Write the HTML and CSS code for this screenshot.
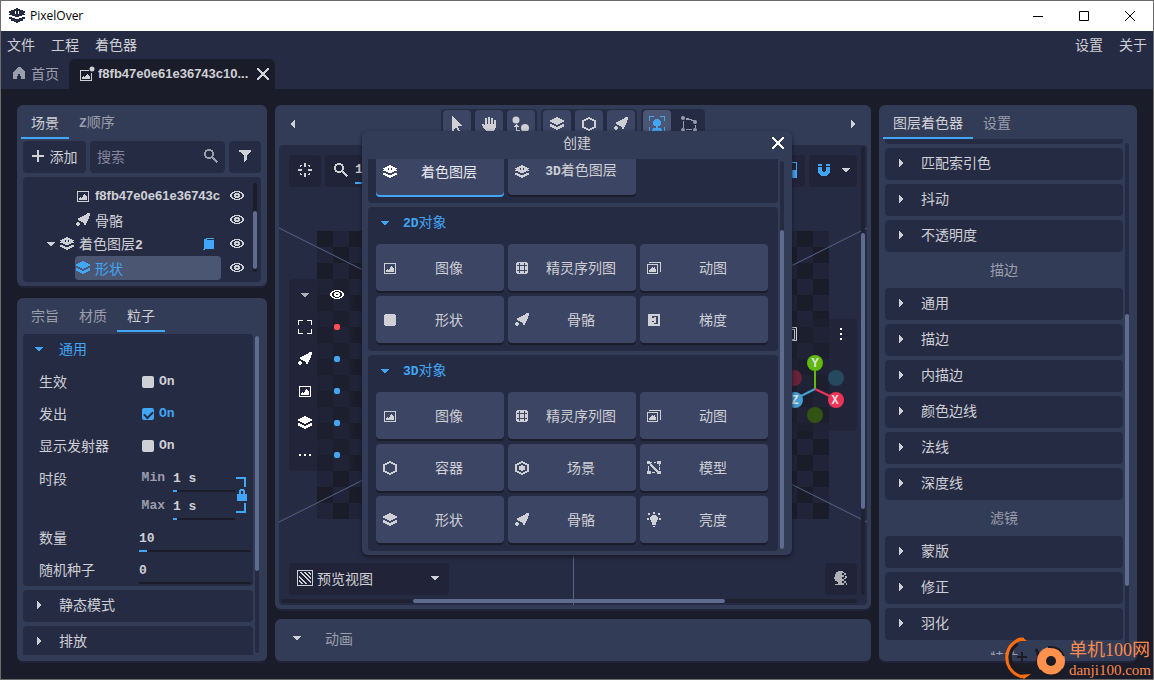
FILE: index.html
```
<!DOCTYPE html>
<html lang="zh-CN">
<head>
<meta charset="utf-8">
<meta name="viewport" content="width=device-width, initial-scale=1">
<title>PixelOver</title>
<link rel="stylesheet" href="styles.css">
</head>
<body>
<svg class="sprite" aria-hidden="true">
  <symbol id="home" viewBox="0 0 14 14"><path d="M6 1h2l5 5v7H9V9.500H8V8H6v1.500H5V13H1V6z"/></symbol>
  <symbol id="image" viewBox="0 0 14 14"><path fill-rule="evenodd" d="M1 2h12v11H1zM2 3v9h10V3z"/><path d="M3 11V9h1V8h1v1h1V8h1V6h1V5h1v1h1v1h1v4z"/></symbol>
  <symbol id="image-dot" viewBox="0 0 16 16"><path fill-rule="evenodd" d="M1 4h9v1H2v9h10V7h1v8H1z"/><path d="M3 13v-2h1v-1h1v1h1v-1h1V9h1V8h1v1h1v1h1v3z"/><circle shape-rendering="auto" cx="13" cy="3" r="2.500"/></symbol>
  <symbol id="layers" viewBox="0 0 14 14"><path d="M6 0h2v1h2v1h2v1h2v2h-2v1h-2v1H8v1H6V7H4V6H2V5H0V3h2V2h2V1h2zM0 7h2v1h2v1h2v1h2V9h2V8h2V7h2v3h-2v1h-2v1H8v1H6v-1H4v-1H2v-1H0z"/></symbol>
  <symbol id="shader" viewBox="0 0 14 14"><path fill-rule="evenodd" d="M6 0h2v1h2v1h2v1h2v1h-1v1h1v1h-3v1H9v1H5V7H3V6H0V5h1V4H0V3h2V2h2V1h2zM5 3v2h1V3zM8 3v2h1V3z"/><path d="M0 8h3v1h2v1h4V9h2V8h3v2h-2v1h-2v1H8v1H6v-1H4v-1H2v-1H0z"/></symbol>
  <symbol id="bone" viewBox="0 0 14 14"><path d="M11 0h3v3h-1v3h-1v2h-1v2h-1v2H8v-2H7V9H5V8H3V7H2V5h2V4h2V3h2V2h2V1h1z"/><path d="M1 9h2v1h1v2H3v1H1v-1H0v-2h1z"/></symbol>
  <symbol id="eye" viewBox="0 0 14 10"><path fill-rule="evenodd" d="M4 0h6v1h2v1h1v1h1v3h-1v1h-1v1h-2v1H4V8H2V7H1V6H0V3h1V2h1V1h2zM5 1v1H3v1H2v3h1v1h2v1h4V7h2V6h1V3h-1V2H9V1z"/><path fill-rule="evenodd" d="M5 2h4v1h1v3H9v1H5V6H4V3h1zM6 4v1h2V4z"/></symbol>
  <symbol id="page" viewBox="0 0 12 12"><path d="M3 0h8v1H4v1h7v9H2v1H0v-1h1V1h2z"/></symbol>
  <symbol id="filter" viewBox="0 0 12 12"><path d="M0 0h12v2h-1v1h-1v1H9v1H8v5H7v1H6v1H5V5H4V4H3V3H2V2H0z"/></symbol>
  <symbol id="search" viewBox="0 0 14 14"><path fill-rule="evenodd" d="M3 0h4v1h2v2h1v4H9v1h1v1h1v1h1v1h1v1h1v1h-1v1h-1v-1h-1v-1h-1v-1H9v-1H8V9H7v1H3V9H1V7H0V3h1V1h2zM3 2v1H2v4h1v1h4V7h1V3H7V2z"/></symbol>
  <symbol id="plus" viewBox="0 0 12 12"><path d="M5 0h2v5h5v2H7v5H5V7H0V5h5z"/></symbol>
  <symbol id="close" viewBox="0 0 12 12"><path d="M0 0h2v1h1v1h1v1h1v1h2V3h1V2h1V1h1V0h2v2h-1v1h-1v1H9v1H8v2h1v1h1v1h1v1h1v2h-2v-1H9v-1H8V9H7V8H5v1H4v1H3v1H2v1H0v-2h1V9h1V8h1V7h1V5H3V4H2V3H1V2H0z"/></symbol>
  <symbol id="down" viewBox="0 0 8 8"><path d="M0 2h8v1H7v1H6v1H5v1H3V5H2V4H1V3H0z"/></symbol>
  <symbol id="right" viewBox="0 0 8 8"><path d="M2 0h1v1h1v1h1v1h1v2H5v1H4v1H3v1H2z"/></symbol>
  <symbol id="left" viewBox="0 0 8 8"><path d="M6 0v8H5V7H4V6H3V5H2V3h1V2h1V1h1V0z"/></symbol>
  <symbol id="hexagon" viewBox="0 0 14 14"><path fill="none" stroke="currentColor" stroke-width="1.700" d="M7 1l6 3v6l-6 3-6-3V4z"/></symbol>
  <symbol id="scene" viewBox="0 0 14 14"><path fill="none" stroke="currentColor" stroke-width="1.700" d="M7 1l6 3v6l-6 3-6-3V4z"/><path d="M4 5h2V4h2v1h2v4H8v1H6V9H4z"/></symbol>
  <symbol id="grid" viewBox="0 0 14 14"><path fill-rule="evenodd" d="M2 1h10v1h1v10h-1v1H2v-1H1V2h1zM4 2v2H2v1h2v4H2v1h2v2h1v-2h4v2h1v-2h2V9h-2V5h2V4h-2V2H9v2H5V2zM5 5h4v4H5z"/><path d="M5 5h4v4H5z"/></symbol>
  <symbol id="gif" viewBox="0 0 14 14"><path fill-rule="evenodd" d="M0 3h11v10H0zM1 4v8h9V4zM2 1h12v10h-1V2H2z"/><path d="M2 11V9h1V8h1V7h1V6h1v1h1V6h1v2h1v3z"/></symbol>
  <symbol id="square" viewBox="0 0 14 14"><path d="M2 1h10v1h1v10h-1v1H2v-1H1V2h1z"/></symbol>
  <symbol id="gradient" viewBox="0 0 14 14"><path fill-rule="evenodd" d="M1 1h12v12H1zM5 3v2h2v2H5v2h2v2h4V3zM7 5h2v2H7zM7 9V7h2v2z"/><path d="M5 6h2v2H5zM7 4h2v2H7zM7 8h2v2H7z"/></symbol>
  <symbol id="mesh" viewBox="0 0 14 14"><path d="M0 0h3v1h2v1H4v1h1v1h1v1h1v1h1v1h1v1h1v1h1v1h3v3h-4v-2H9v-1H8V9H7V8H6V7H5V6H4V5H3V3H0zM10 0h4v3h-1v2h-1V3h-2zM0 10h1V5h1v5h2v3H0zM12 6h1v3h-1zM5 11h3v1H5zM7 1h2v1H7z"/></symbol>
  <symbol id="bulb" viewBox="0 0 14 16"><path d="M5 3h4v1h1v1h1v3h-1v2H9v3H5v-3H4V8H3V5h1V4h1zM6 14h2v1H6zM6 0h2v2H6zM1 1h2v2H1zM11 1h2v2h-2zM0 6h2v2H0zM12 6h2v2h-2z"/></symbol>
  <symbol id="cursor" viewBox="0 0 12 16"><path d="M1 0h1v1h1v1h1v1h1v1h1v1h1v1h1v1h1v1h1v1h1v1H7v2h1v2h1v2H7v-2H6v-2H4v1H3v2H1z"/></symbol>
  <symbol id="hand" viewBox="0 0 16 16"><path d="M4 2h2v6h1V1h2v7h1V2h2v6h1V4h2v8h-1v2h-1v2H5v-2H4v-1H3v-1H2v-2H1V8h2v1h1z"/></symbol>
  <symbol id="nodes" viewBox="0 0 18 16"><circle shape-rendering="auto" cx="4" cy="4" r="3.500"/><circle shape-rendering="auto" cx="13" cy="12" r="4"/><path d="M4 8h1v1h1v1h1v1H5v3h3v1H4v-4H2v-1h1V9h1z"/></symbol>
  <symbol id="select-shape" viewBox="0 0 16 16"><path d="M0 0h5v1H1v4H0zM11 0h5v5h-1V1h-4zM0 11h1v4h3v1H0zM15 11h1v5h-4v-1h3zM6 3h4v1h1v1h1v4h-1v1H9v2h3v1h1v2H3v-2h1v-1h3v-2H5V9H4V5h1V4h1z"/></symbol>
  <symbol id="polygon" viewBox="0 0 16 16"><g shape-rendering="auto"><circle cx="2" cy="2" r="2"/><circle cx="14" cy="6" r="2"/><circle cx="2" cy="14" r="2"/><circle cx="14" cy="14" r="2"/></g><path d="M5 2h3v1h3v1h2v1h-3V4H5zM2 5h1v7H2zM14 9h1v3h-1zM5 13h6v1H5z"/></symbol>
  <symbol id="center" viewBox="0 0 14 14"><path d="M6 0h2v4H6zM6 10h2v4H6zM0 6h4v2H0zM10 6h4v2h-4zM2 2h2v1H3v1H2zM10 2h2v2h-1V3h-1zM2 10h1v1h1v1H2zM11 10h1v2h-2v-1h1z"/></symbol>
  <symbol id="frame" viewBox="0 0 14 14"><path d="M0 0h5v1H1v4H0zM9 0h5v5h-1V1H9zM0 9h1v4h4v1H0zM13 9h1v5H9v-1h4z"/></symbol>
  <symbol id="magnet" viewBox="0 0 12 12"><path d="M0 0h4v2H0zM8 0h4v2H8zM0 3h4v4h1v1h2V7h1V3h4v6h-1v1h-1v1H9v1H3v-1H2v-1H1V9H0z"/></symbol>
  <symbol id="dots" viewBox="0 0 14 14"><path d="M1 6h2v2H1zM6 6h2v2H6zM11 6h2v2h-2z"/></symbol>
  <symbol id="hatch" viewBox="0 0 16 16"><path fill-rule="evenodd" d="M0 0h16v16H0zM1 1v14h14V1z"/><path d="M2 2h2l10 10v2zM6 2h2l6 6v2zM10 2h2l2 2v2zM2 6l8 8H8L2 8zM2 10l4 4H4l-2-2z"/></symbol>
  <symbol id="dither" viewBox="0 0 14 14"><path d="M4 0h4v14H1v-1h3v-2H3v-1H1V8H0V6h1V3h1V1h2zM8 0h1v1h1v1H8zM10 2h2v2h-2zM8 4h2v2H8zM11 5h2v2h-2zM8 8h2v2H8zM10 7h2v1h-2zM10 10h2v2h-2zM8 12h2v2H8zM12 12h1v2h-1z"/></symbol>
  <symbol id="lock" viewBox="0 0 10 12"><path fill-rule="evenodd" d="M3 0h4v1h1v4h2v7H0V5h2V1h1zM4 2v3h2V2z"/></symbol>
</svg>

<div class="window">
  <header class="titlebar">
    <svg class="icon icon-logo"><use href="#shader"/></svg>
    <span class="title">PixelOver</span>
    <div class="caption">
      <button aria-label="最小化"><svg viewBox="0 0 10 10"><path d="M0 5.500h10"/></svg></button>
      <button aria-label="最大化"><svg viewBox="0 0 10 10"><path d="M.500.500h9v9h-9z"/></svg></button>
      <button aria-label="关闭窗口"><svg viewBox="0 0 10 10"><path d="M0 0l10 10M10 0L0 10"/></svg></button>
    </div>
  </header>

  <div class="app">
    <div class="head">
      <nav class="menubar">
        <button>文件</button><button>工程</button><button>着色器</button>
        <span class="spacer"></span>
        <button>设置</button><button>关于</button>
      </nav>
      <div class="doctabs">
        <button class="doctab"><svg class="icon"><use href="#home"/></svg>首页</button>
        <div class="doctab doctab-on"><svg class="icon icon-16"><use href="#image-dot"/></svg><span class="file">f8fb47e0e61e36743c10...</span><button class="tabclose" aria-label="关闭标签"><svg class="icon icon-12"><use href="#close"/></svg></button></div>
      </div>
    </div>

    <main class="main">
      <div class="col side">
        <section class="panel scene">
          <div class="tabs"><button class="tab on">场景</button><button class="tab"><span class="px">Z</span>顺序</button></div>
          <div class="inner">
            <div class="tools">
              <button class="tool add"><svg class="icon icon-12"><use href="#plus"/></svg>添加</button>
              <label class="tool find"><input type="text" placeholder="搜索" aria-label="搜索"><svg class="icon"><use href="#search"/></svg></label>
              <button class="tool funnel" aria-label="筛选"><svg class="icon icon-12"><use href="#filter"/></svg></button>
            </div>
            <div class="treebox">
              <ul class="tree">
                <li><div class="node depth2"><svg class="icon"><use href="#image"/></svg><span class="file">f8fb47e0e61e36743c</span></div><button class="see" aria-label="可见"><svg class="icon icon-eye"><use href="#eye"/></svg></button></li>
                <li><div class="node depth2"><svg class="icon"><use href="#bone"/></svg>骨骼</div><button class="see" aria-label="可见"><svg class="icon icon-eye"><use href="#eye"/></svg></button></li>
                <li><div class="node depth1"><svg class="icon icon-8"><use href="#down"/></svg><svg class="icon"><use href="#shader"/></svg><span>着色图层<span class="px">2</span></span><svg class="icon icon-12 badge"><use href="#page"/></svg></div><button class="see" aria-label="可见"><svg class="icon icon-eye"><use href="#eye"/></svg></button></li>
                <li><div class="node depth2 picked"><svg class="icon"><use href="#layers"/></svg>形状</div><button class="see" aria-label="可见"><svg class="icon icon-eye"><use href="#eye"/></svg></button></li>
              </ul>
              <div class="bar bar-tree"><i></i></div>
            </div>
          </div>
        </section>

        <section class="panel props">
          <div class="tabs"><button class="tab">宗旨</button><button class="tab">材质</button><button class="tab on">粒子</button></div>
          <div class="inner scroll">
            <div class="list">
              <div class="group">
                <button class="fold open"><svg class="icon icon-8"><use href="#down"/></svg>通用</button>
                <div class="row"><span>生效</span><label class="check px"><input type="checkbox">On</label></div>
                <div class="row"><span>发出</span><label class="check px"><input type="checkbox" checked><b>On</b></label></div>
                <div class="row"><span>显示发射器</span><label class="check px"><input type="checkbox">On</label></div>
                <div class="row tall"><span>时段</span>
                  <div class="range">
                    <label class="num px">Min<input type="text" value="1 s"></label>
                    <label class="num px">Max<input type="text" value="1 s"></label>
                    <button class="link" aria-label="锁定"><svg class="icon icon-12"><use href="#lock"/></svg></button>
                  </div>
                </div>
                <div class="row"><label for="count">数量</label><input class="wide some px" id="count" type="text" value="10"></div>
                <div class="row"><label for="seed">随机种子</label><input class="wide px" id="seed" type="text" value="0"></div>
              </div>
              <button class="fold"><svg class="icon icon-8"><use href="#right"/></svg>静态模式</button>
              <button class="fold"><svg class="icon icon-8"><use href="#right"/></svg>排放</button>
            </div>
            <div class="bar bar-props"><i></i></div>
          </div>
        </section>
      </div>

      <div class="col middle">
        <section class="panel stage">
          <div class="stagebar">
            <button class="nudge" aria-label="向左"><svg class="icon icon-8"><use href="#left"/></svg></button>
            <div class="modes">
              <div class="modeset"><button aria-label="选择"><svg class="icon icon-16"><use href="#cursor"/></svg></button><button aria-label="平移"><svg class="icon icon-16"><use href="#hand"/></svg></button><button aria-label="节点"><svg class="icon icon-18"><use href="#nodes"/></svg></button></div>
              <div class="modeset"><button aria-label="图层"><svg class="icon"><use href="#layers"/></svg></button><button aria-label="容器"><svg class="icon"><use href="#hexagon"/></svg></button><button aria-label="骨骼"><svg class="icon"><use href="#bone"/></svg></button></div>
              <div class="modeset"><button class="active" aria-label="对象"><svg class="icon icon-16"><use href="#select-shape"/></svg></button><button class="flat" aria-label="多边形"><svg class="icon icon-16"><use href="#polygon"/></svg></button></div>
            </div>
            <button class="nudge" aria-label="向右"><svg class="icon icon-8"><use href="#right"/></svg></button>
          </div>
          <div class="canvas">
            <div class="checker"></div>
            <svg class="guides" viewBox="0 0 588 460" preserveAspectRatio="xMidYMid slice"><path d="M0 83l588 294M588 83L0 377M294.500 0v460"/></svg>
            <div class="hud">
              <div class="hudrow">
                <button class="chip" aria-label="居中"><svg class="icon"><use href="#center"/></svg></button>
                <label class="chip zoom px"><svg class="icon"><use href="#search"/></svg><input type="text" value="100%" aria-label="缩放"></label>
                <span class="spacer"></span>
                <button class="chip split" aria-label="对比"><i></i></button>
                <button class="chip snap" aria-label="吸附"><svg class="icon icon-12"><use href="#magnet"/></svg><svg class="icon icon-8"><use href="#down"/></svg></button>
              </div>
              <div class="hudmid">
                <div class="overlay">
                  <svg class="icon icon-8 dim"><use href="#down"/></svg><svg class="icon icon-eye"><use href="#eye"/></svg>
                  <svg class="icon"><use href="#frame"/></svg><i class="dot red"></i>
                  <svg class="icon"><use href="#bone"/></svg><i class="dot"></i>
                  <svg class="icon"><use href="#image"/></svg><i class="dot"></i>
                  <svg class="icon"><use href="#layers"/></svg><i class="dot"></i>
                  <svg class="icon"><use href="#dots"/></svg><i class="dot"></i>
                </div>
                <div class="axes">
                  <svg viewBox="0 0 84 112" role="img" aria-label="坐标轴">
                    <g fill="none" stroke="#cfd0d5"><path d="M14.500 8.500h9v13h-9zM17.500 10.500h4v10h-4z"/></g>
                    <path fill="#fff" d="M67 9h2v2h-2zM67 14h2v2h-2zM67 19h2v2h-2z"/>
                    <circle cx="21" cy="59" r="8" fill="#672337"/><circle cx="63" cy="59" r="8" fill="#25495f"/><circle cx="42" cy="96" r="8" fill="#315314"/>
                    <path stroke="#62b80c" stroke-width="2" d="M42 44v26"/><path stroke="#ee3355" stroke-width="2" d="M42 70l21 10"/><path stroke="#439fd2" stroke-width="2" d="M42 70L22 80"/>
                    <circle cx="42" cy="44" r="8" fill="#62b80c"/><circle cx="63" cy="81" r="8" fill="#ee3355"/><circle cx="22" cy="81" r="8" fill="#439fd2"/>
                    <text x="42" y="48">Y</text><text x="62" y="85">X</text><text x="22" y="85">Z</text>
                  </svg>
                </div>
              </div>
              <div class="hudrow">
                <label class="chip view"><svg class="icon icon-16"><use href="#hatch"/></svg><select aria-label="视图"><option>预览视图</option></select><svg class="icon icon-8"><use href="#down"/></svg></label>
                <span class="spacer"></span>
                <button class="chip dim" aria-label="抖动"><svg class="icon"><use href="#dither"/></svg></button>
              </div>
            </div>
            <div class="bar bar-v"><i></i></div>
            <div class="bar-h"><i></i></div>
          </div>
        </section>
        <section class="panel timeline"><svg class="icon icon-8"><use href="#down"/></svg><span>动画</span></section>
      </div>

      <section class="panel shaders">
        <div class="tabs"><button class="tab on">图层着色器</button><button class="tab">设置</button></div>
        <div class="inner scroll">
          <div class="list scrolled">
            <button class="fold"></button>
            <button class="fold"><svg class="icon icon-8"><use href="#right"/></svg>匹配索引色</button>
            <button class="fold"><svg class="icon icon-8"><use href="#right"/></svg>抖动</button>
            <button class="fold"><svg class="icon icon-8"><use href="#right"/></svg>不透明度</button>
            <h3>描边</h3>
            <button class="fold"><svg class="icon icon-8"><use href="#right"/></svg>通用</button>
            <button class="fold"><svg class="icon icon-8"><use href="#right"/></svg>描边</button>
            <button class="fold"><svg class="icon icon-8"><use href="#right"/></svg>内描边</button>
            <button class="fold"><svg class="icon icon-8"><use href="#right"/></svg>颜色边线</button>
            <button class="fold"><svg class="icon icon-8"><use href="#right"/></svg>法线</button>
            <button class="fold"><svg class="icon icon-8"><use href="#right"/></svg>深度线</button>
            <h3>滤镜</h3>
            <button class="fold"><svg class="icon icon-8"><use href="#right"/></svg>蒙版</button>
            <button class="fold"><svg class="icon icon-8"><use href="#right"/></svg>修正</button>
            <button class="fold"><svg class="icon icon-8"><use href="#right"/></svg>羽化</button>
            <h3>特效</h3>
          </div>
          <div class="bar bar-shaders"><i></i></div>
        </div>
      </section>
    </main>

    <div class="modal" role="dialog" aria-label="创建">
      <div class="modalhead"><h2>创建</h2><button aria-label="关闭"><svg class="icon icon-12"><use href="#close"/></svg></button></div>
      <div class="modalbody">
        <div class="cards">
          <div class="card">
            <div class="tiles">
              <button class="tile chosen"><svg class="icon"><use href="#shader"/></svg><span>着色图层</span></button>
              <button class="tile"><svg class="icon"><use href="#shader"/></svg><span><b class="px">3D</b>着色图层</span></button>
            </div>
          </div>
          <div class="card">
            <button class="cardhead"><svg class="icon icon-8"><use href="#down"/></svg><span><b class="px">2D</b>对象</span></button>
            <div class="tiles">
              <button class="tile"><svg class="icon"><use href="#image"/></svg><span>图像</span></button>
              <button class="tile"><svg class="icon"><use href="#grid"/></svg><span>精灵序列图</span></button>
              <button class="tile"><svg class="icon"><use href="#gif"/></svg><span>动图</span></button>
              <button class="tile"><svg class="icon"><use href="#square"/></svg><span>形状</span></button>
              <button class="tile"><svg class="icon"><use href="#bone"/></svg><span>骨骼</span></button>
              <button class="tile"><svg class="icon"><use href="#gradient"/></svg><span>梯度</span></button>
            </div>
          </div>
          <div class="card">
            <button class="cardhead"><svg class="icon icon-8"><use href="#down"/></svg><span><b class="px">3D</b>对象</span></button>
            <div class="tiles">
              <button class="tile"><svg class="icon"><use href="#image"/></svg><span>图像</span></button>
              <button class="tile"><svg class="icon"><use href="#grid"/></svg><span>精灵序列图</span></button>
              <button class="tile"><svg class="icon"><use href="#gif"/></svg><span>动图</span></button>
              <button class="tile"><svg class="icon"><use href="#hexagon"/></svg><span>容器</span></button>
              <button class="tile"><svg class="icon"><use href="#scene"/></svg><span>场景</span></button>
              <button class="tile"><svg class="icon"><use href="#mesh"/></svg><span>模型</span></button>
              <button class="tile"><svg class="icon"><use href="#layers"/></svg><span>形状</span></button>
              <button class="tile"><svg class="icon"><use href="#bone"/></svg><span>骨骼</span></button>
              <button class="tile"><svg class="icon icon-tall"><use href="#bulb"/></svg><span>亮度</span></button>
            </div>
          </div>
        </div>
        <div class="bar bar-modal"><i></i></div>
      </div>
    </div>
  </div>

  <div class="watermark">
    <svg viewBox="0 0 64 44" aria-hidden="true">
      <path fill="none" stroke="#1d1a22" stroke-width="3" d="M14 8a14 14 0 1 0 18 5"/>
      <path fill="none" stroke="#ff6c0a" stroke-width="3" d="M20 3C0 4-5 34 18 41"/>
      <path fill="#ff6c0a" d="M10 5q7-7 13 0zM14 39l13-1-7 5z"/>
      <path stroke="#1d1a22" stroke-width="2" d="M18 16v10M13 21h10M32 13l4 9"/>
      <circle cx="47" cy="25" r="14" fill="#ff914d"/>
      <path fill="none" stroke="#1d1a22" stroke-width="2" d="M36 34a14 14 0 0 0 23-1M44 11q12-1 16 9"/>
      <circle cx="47" cy="25" r="5" fill="#1d1a22"/>
    </svg>
    <div><p class="wm-name">单机100网</p><p class="wm-url">danji100.com</p></div>
  </div>
</div>
</body>
</html>
```
FILE: styles.css
```
* { box-sizing: border-box; }
:root {
  --ink: #cfd0d5;
  --mute: #9b9eac;
  --blue: #41a6f6;
  --night: #1b1c2a;
  --deep: #262b44;
  --panel: #333c57;
  --tile: #3c4564;
  --grip: #5f6c8e;
}
body { margin: 0; background: #6b6b6b; color: var(--ink); font: 14px/20px "Noto Sans CJK SC", sans-serif; }
button, input, select { font: inherit; color: inherit; background: none; border: 0; padding: 0; margin: 0; min-width: 0; outline: 0; }
h2, h3, p, ul { margin: 0; padding: 0; font: inherit; list-style: none; }
.sprite { position: absolute; width: 0; height: 0; }
.px { font: bold 13px/20px "Liberation Mono", monospace; }
.file { font: bold 13px/20px "Liberation Sans", sans-serif; }
.icon { width: 14px; height: 14px; flex: none; fill: currentColor; shape-rendering: crispEdges; }
.icon-8 { width: 8px; height: 8px; }
.icon-12 { width: 12px; height: 12px; }
.icon-16 { width: 16px; height: 16px; }
.icon-18 { width: 18px; height: 16px; }
.icon-eye { height: 10px; }
.icon-tall { height: 16px; }
.spacer { flex: 1; }
.dim { color: #b0b1b8; }

.window { position: relative; height: 100vh; padding: 1px; display: flex; flex-direction: column; overflow: hidden; }
.titlebar { flex: none; height: 30px; display: flex; align-items: center; background: #fff; color: #000; padding-left: 8px; }
.icon-logo { width: 16px; height: 16px; color: #262b44; }
.title { margin-left: 5px; font: 12px/18px "Open Sans", sans-serif; }
.caption { margin-left: auto; display: flex; }
.caption button { width: 46px; height: 30px; display: grid; place-items: center; }
.caption svg { width: 10px; height: 10px; fill: none; stroke: #000; }

.app { position: relative; flex: 1; min-height: 0; display: flex; flex-direction: column; background: var(--night); }
.head { background: var(--deep); }
.menubar { display: flex; gap: 16px; height: 28px; align-items: center; padding: 0 6px 2px 6px; }
.doctabs { display: flex; height: 30px; }
.doctab { display: flex; align-items: center; gap: 5px; padding: 0 10px 2px 11px; color: var(--mute); }
.doctab-on { width: 206px; gap: 3px; padding: 0 6px 0 10px; background: var(--night); color: var(--ink); border-radius: 6px 6px 0 0; }
.tabclose { margin-left: auto; display: grid; }

.main { flex: 1; min-height: 0; display: flex; gap: 8px; padding: 16px 16px 18px; }
.col { display: flex; flex-direction: column; min-height: 0; }
.side { width: 250px; gap: 12px; }
.middle { flex: 1; min-width: 0; gap: 10px; }
.panel { background: var(--panel); border-radius: 6px; box-shadow: 0 2px #212438; padding: 2px 4px 6px; }
.tabs { display: flex; height: 32px; }
.tab { padding: 0 10px; color: var(--mute); border-bottom: 2px solid transparent; }
.tab.on { color: var(--ink); border-color: var(--blue); }
.inner { padding: 2px; }

.scene { flex: none; padding-bottom: 2px; }
.tools { display: flex; gap: 4px; height: 32px; }
.tool { display: flex; align-items: center; justify-content: center; gap: 6px; background: var(--deep); border-radius: 4px; padding-bottom: 2px; }
.add { width: 63px; }
.find { flex: 1; min-width: 0; padding: 0 7px 2px; color: var(--mute); }
.find input { flex: 1; }
.find input::placeholder { color: #81859a; opacity: 1; }
.funnel { width: 32px; }
.treebox { margin-top: 4px; height: 105px; display: flex; background: var(--deep); border-radius: 4px; padding-right: 4px; }
.tree { flex: 1; min-width: 0; padding-top: 7px; }
.tree li { display: flex; align-items: center; height: 24px; }
.node { flex: 1; min-width: 0; display: flex; align-items: center; gap: 5px; height: 24px; border-radius: 4px; white-space: nowrap; }
.depth1 { margin-left: 24px; }
.depth2 { margin-left: 52px; padding-left: 1px; }
.picked { background: #4a5672; color: var(--blue); }
.badge { color: var(--blue); margin-left: auto; margin-right: 6px; }
.see { flex: none; width: 32px; display: grid; place-items: center; }

.bar { width: 4px; flex: none; background: var(--night); border-radius: 2px; }
.bar i { display: block; background: var(--grip); border-radius: 2px; }
.bar-tree { margin: 6px 0 10px; }
.bar-tree i { margin-top: 28px; height: 58px; }

.props { flex: 1; min-height: 0; display: flex; flex-direction: column; }
.scroll { flex: 1; min-height: 0; display: flex; gap: 2px; overflow: hidden; padding-bottom: 0; }
.list { flex: 1; min-width: 0; display: flex; flex-direction: column; gap: 4px; overflow: hidden; }
.scrolled { margin-top: -29px; }
.fold { flex: none; display: flex; align-items: center; gap: 16px; height: 32px; width: 100%; padding: 0 0 4px 12px; background: var(--deep); border-radius: 4px; text-align: left; }
.fold .icon { margin-top: 2px; }
.fold.open { color: var(--blue); }
.group { flex: none; background: var(--deep); border-radius: 4px; }
.row { display: flex; height: 32px; align-items: center; padding: 0 2px 0 16px; }
.row > :first-child { width: 100px; padding-bottom: 2px; }
.tall { height: 60px; align-items: flex-start; padding-top: 6px; }
.check { display: flex; align-items: center; gap: 5px; padding-left: 3px; }
.check input { appearance: none; width: 12px; height: 12px; background: var(--ink); border-radius: 2px; }
.check b { color: var(--blue); }
.check input:checked { background: var(--blue); display: grid; place-items: center; }
.check input:checked::after { content: ""; width: 7px; height: 4px; border: solid var(--deep); border-width: 0 0 2px 2px; transform: rotate(-45deg); }
.range { position: relative; flex: 1; display: flex; flex-direction: column; gap: 2px; }
.num { display: flex; justify-content: flex-end; gap: 8px; height: 26px; align-items: flex-start; color: var(--mute); }
.num input { width: 62px; height: 24px; color: var(--ink); border-bottom: 2px solid; border-image: linear-gradient(90deg, var(--blue) 6px, var(--night) 6px) 2; margin-right: 16px; padding-bottom: 2px; }
.link { position: absolute; right: 3px; top: 9px; width: 12px; height: 36px; color: var(--blue); display: grid; place-items: center; }
.link::before, .link::after { content: ""; position: absolute; left: 0; width: 8px; height: 8px; border-right: 2px solid; }
.link::before { top: 0; border-top: 2px solid; }
.link::after { bottom: 0; border-bottom: 2px solid; }
.wide { flex: 1; height: 28px; padding-top: 3px; border-bottom: 2px solid var(--night); }
.some { border-image: linear-gradient(90deg, var(--blue) 10px, var(--night) 10px) 2; }
.bar-props, .bar-shaders { background: var(--deep); margin: 2px 2px 2px 0; }
.bar-props i { height: 235px; }

.stage { flex: 1; min-height: 0; display: flex; flex-direction: column; padding: 4px; }
.stagebar { flex: none; height: 36px; display: flex; justify-content: space-between; align-items: flex-start; padding: 0 10px; }
.nudge { height: 30px; display: grid; place-items: center; }
.modes { display: flex; gap: 4px; }
.modeset { display: flex; gap: 4px; padding: 1px 2px; background: var(--deep); border-radius: 4px; }
.modeset button { width: 28px; height: 28px; display: grid; place-items: center; background: var(--tile); border-radius: 4px; }
.modeset .active { background: #4a5673; color: var(--blue); }
.modeset .flat { background: none; color: var(--mute); }
.canvas { flex: 1; min-height: 0; display: grid; grid-template-columns: 1fr 4px; grid-template-rows: 1fr 4px; gap: 4px; padding: 2px; background: var(--deep); border-radius: 4px; position: relative; overflow: hidden; }
.checker { position: absolute; inset: 0; margin: auto; width: 512px; height: 288px; background: repeating-conic-gradient(#212338 0 25%, #1b1c2a 0 50%) 0 0 / 32px 32px; }
.guides { position: absolute; inset: 0; width: 100%; height: 100%; fill: none; stroke: #566384; }
.hud { position: relative; display: flex; flex-direction: column; padding: 8px 0 0 8px; min-height: 0; }
.hudrow { flex: none; display: flex; gap: 4px; height: 32px; }
.chip { display: flex; align-items: center; justify-content: center; width: 32px; background: #212338; border-radius: 4px; padding-bottom: 2px; }
.zoom { width: 96px; gap: 7px; justify-content: flex-start; padding-left: 9px; }
.zoom input { width: 54px; height: 28px; border-bottom: 2px solid var(--blue); }
.split { width: 48px; justify-content: flex-end; padding-right: 8px; }
.split i { width: 16px; height: 16px; border: 1px solid var(--blue); background: linear-gradient(transparent 50%, var(--blue) 50%); }
.snap { width: 48px; gap: 12px; color: var(--blue); padding-left: 2px; }
.snap .icon-8 { color: var(--ink); }
.hudmid { flex: 1; display: flex; justify-content: space-between; align-items: center; }
.overlay { display: grid; grid-template-columns: 32px 32px; grid-auto-rows: 32px; place-items: center; background: #20223499; border-radius: 4px; color: #fff; }
.dot { width: 6px; height: 6px; border-radius: 2px; background: var(--blue); }
.red { background: #ff4f50; }
.axes { width: 84px; height: 112px; background: #20223499; border-radius: 4px; }
.axes text { fill: #dfe3e8; font: bold 12px "Liberation Mono", monospace; text-anchor: middle; }
.view { width: 160px; justify-content: flex-start; padding: 0 10px 2px 8px; gap: 4px; }
.view select { flex: 1; appearance: none; }
.bar-v { position: relative; background: #202234; }
.bar-v i { margin-top: 86px; height: 276px; }
.bar-h { position: relative; height: 4px; background: #202234; border-radius: 2px; }
.bar-h i { display: block; height: 4px; margin: 0 23%; background: var(--grip); border-radius: 2px; }
.timeline { flex: none; height: 42px; display: flex; align-items: center; gap: 24px; padding: 0 18px 5px; color: var(--mute); }
.timeline .icon { color: var(--ink); }

.shaders { width: 258px; display: flex; flex-direction: column; min-height: 0; }
.shaders h3 { flex: none; height: 28px; line-height: 26px; text-align: center; color: var(--mute); }
.bar-shaders i { margin-top: 171px; height: 272px; }

.modal { position: absolute; top: 100px; left: 0; right: 0; margin: 0 auto; width: 430px; height: 424px; padding: 0 6px 4px; display: flex; flex-direction: column; background: var(--panel); border-radius: 6px; box-shadow: 0 2px 4px #161824; }
.modalhead { flex: none; height: 28px; display: flex; align-items: center; justify-content: center; position: relative; padding-bottom: 6px; }
.modalhead button { position: absolute; right: 2px; top: 6px; color: #fff; display: grid; }
.modalbody { flex: 1; min-height: 0; display: flex; gap: 2px; }
.cards { width: 410px; display: flex; flex-direction: column; justify-content: flex-end; gap: 4px; overflow: hidden; }
.card { flex: none; background: var(--deep); border-radius: 4px; padding: 0 10px 8px 8px; }
.cardhead { display: flex; align-items: center; gap: 14px; height: 37px; padding: 0 5px 6px; color: var(--blue); }
.tiles { display: grid; grid-template-columns: repeat(3, 1fr); gap: 5px 4px; }
.tile { height: 47px; display: flex; align-items: center; padding: 0 3px 0 7px; background: var(--tile); border-radius: 4px; box-shadow: 0 2px var(--night); }
.tile span { flex: 1; text-align: center; padding-bottom: 2px; }
.chosen { box-shadow: 0 2px var(--blue); color: #e8e8f0; }
.chosen .icon { color: #fff; }
.bar-modal { background: var(--deep); margin: 2px 0; }
.bar-modal i { margin-top: 69px; height: 319px; }

.watermark { position: absolute; right: 3px; bottom: 0; display: flex; align-items: flex-end; gap: 1px; color: #f98a4b; }
.watermark svg { width: 64px; height: 44px; }
.wm-name { font: 18px/20px "Liberation Serif", "Noto Sans CJK SC", serif; }
.wm-url { font: 15px/20px "Liberation Serif", serif; }
```
